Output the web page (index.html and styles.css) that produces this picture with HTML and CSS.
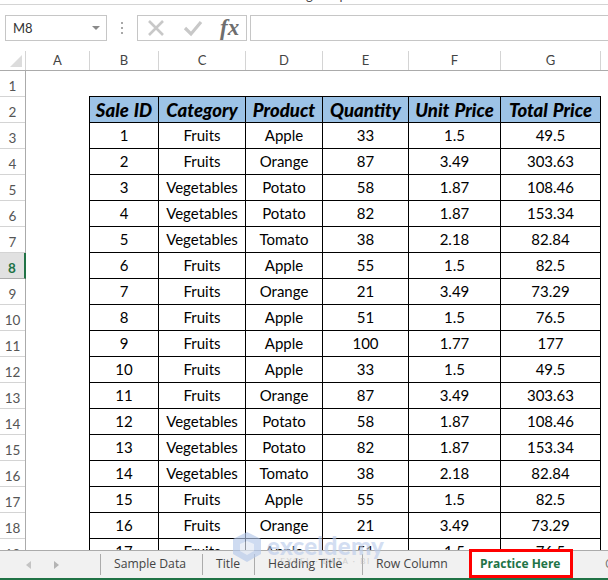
FILE: index.html
```html
<!DOCTYPE html>
<html lang="en">
<head>
<meta charset="utf-8">
<title>Practice Here</title>
<link rel="stylesheet" href="styles.css">
</head>
<body>
<div class="app">
  <div class="titlebar"><span class="title-text">Heading Template</span></div>
  <div class="formula">
    <div class="namebox"><span>M8</span><i class="caret"></i></div>
    <div class="grip"><b></b><b></b><b></b></div>
    <div class="fbtns">
      <svg class="ico" width="18" height="18" viewBox="0 0 18 18"><path d="M2 2 L16 16 M16 2 L2 16" stroke="#c8c8c8" stroke-width="2.6" fill="none"/></svg>
      <svg class="ico" width="20" height="18" viewBox="0 0 20 18"><path d="M2 9 L8 15 L18 3" stroke="#c8c8c8" stroke-width="3.2" fill="none"/></svg>
      <span class="fx">fx</span>
    </div>
    <div class="finput"></div>
  </div>
  <div class="colhead">
    <div class="corner"><i></i></div>
    <div class="ch a">A</div><div class="ch b">B</div><div class="ch c">C</div><div class="ch d">D</div><div class="ch e">E</div><div class="ch f">F</div><div class="ch g">G</div>
  </div>
  <div class="sheet">
    <div class="rowhead" id="rowhead"></div>
    <div class="cells">
      <div class="spacer"></div>
      <div class="table" id="table"></div>
    </div>
  </div>
  <div class="tabs">
    <div class="nav"><i class="left"></i><i class="right"></i></div>
    <div class="tab t1">Sample Data</div>
    <div class="tab t2">Title</div>
    <div class="tab t3">Heading Title</div>
    <div class="tab t4">Row Column</div>
    <div class="tab active">Practice Here</div>
    <div class="tab more">C</div>
  </div>
  <div class="status"></div>
  <div class="mark">
    <svg width="32" height="30" viewBox="0 0 32 30"><path d="M16 0 L30 7 L30 22 L16 30 L2 22 L2 7 Z" fill="#b4c8ea"/><path d="M16 9 L23 12 L23 19 L16 23 L9 19 L9 12 Z" fill="#dfe7f5"/></svg>
    <div class="mark-text"><span class="mark-big">exceldemy</span><span class="mark-small">EXCEL · DATA · BI</span></div>
  </div>
</div>
<script src="app.js"></script>
</body>
</html>
```
FILE: app.js
```js
var data = [
 [1,"Fruits","Apple",33,"1.5","49.5"],[2,"Fruits","Orange",87,"3.49","303.63"],
 [3,"Vegetables","Potato",58,"1.87","108.46"],[4,"Vegetables","Potato",82,"1.87","153.34"],
 [5,"Vegetables","Tomato",38,"2.18","82.84"],[6,"Fruits","Apple",55,"1.5","82.5"],
 [7,"Fruits","Orange",21,"3.49","73.29"],[8,"Fruits","Apple",51,"1.5","76.5"],
 [9,"Fruits","Apple",100,"1.77","177"],[10,"Fruits","Apple",33,"1.5","49.5"],
 [11,"Fruits","Orange",87,"3.49","303.63"],[12,"Vegetables","Potato",58,"1.87","108.46"],
 [13,"Vegetables","Potato",82,"1.87","153.34"],[14,"Vegetables","Tomato",38,"2.18","82.84"],
 [15,"Fruits","Apple",55,"1.5","82.5"],[16,"Fruits","Orange",21,"3.49","73.29"],
 [17,"Fruits","Apple",51,"1.5","76.5"]];
var heads = ["Sale ID","Category","Product","Quantity","Unit Price","Total Price"];
var rh = document.getElementById("rowhead");
for (var i = 1; i <= 19; i++) {
  var r = document.createElement("div");
  r.className = "rn" + (i === 8 ? " sel" : "");
  r.textContent = i;
  rh.appendChild(r);
}
var t = document.getElementById("table");
function add(txt, cls) {
  var c = document.createElement("div");
  c.className = cls;
  c.textContent = txt;
  t.appendChild(c);
}
heads.forEach(function (h) { add(h, "cell head"); });
data.forEach(function (row) { row.forEach(function (v) { add(v, "cell"); }); });
```
FILE: styles.css
```css
* { box-sizing: border-box; }
html, body { margin: 0; padding: 0; }
body { width: 608px; height: 580px; overflow: hidden; background: #fff; font-family: Lato, "Open Sans", sans-serif; }
.app { width: 608px; height: 580px; display: flex; flex-direction: column; overflow: hidden; position: relative; }

.titlebar { height: 5px; flex: none; border-bottom: 1px solid #d4d4d4; overflow: hidden; text-align: center; }
.title-text { display: block; font-size: 13px; line-height: 16px; margin-top: -13px; margin-left: 25px; color: #444; }

.formula { height: 46px; flex: none; display: flex; align-items: flex-start; padding: 10px 0 0 5px; }
.namebox { width: 102px; height: 26px; border: 1px solid #c6c6c6; display: flex; align-items: center; justify-content: space-between; padding: 0 6px 0 7px; font-size: 13px; color: #333; }
.caret { width: 0; height: 0; border-left: 4px solid transparent; border-right: 4px solid transparent; border-top: 4px solid #8a8a8a; }
.grip { width: 30px; height: 26px; display: flex; flex-direction: column; align-items: center; justify-content: center; gap: 3px; }
.grip b { width: 2px; height: 2px; background: #a8a8a8; }
.fbtns { width: 110px; height: 26px; border: 1px solid #c6c6c6; display: flex; align-items: center; padding-left: 9px; gap: 18px; }
.fx { font-family: "Liberation Serif", serif; font-style: italic; font-weight: bold; font-size: 23px; color: #6e6e6e; line-height: 20px; margin-left: -1px; }
.finput { flex: 1; height: 26px; margin-left: 3px; border: solid #c6c6c6; border-width: 1px 0 1px 1px; }

.colhead { height: 20px; flex: none; display: flex; border-bottom: 1px solid #ababab; font-size: 13px; color: #444; }
.corner { width: 26px; border-right: 1px solid #d4d4d4; position: relative; }
.corner i { position: absolute; right: 3px; bottom: 3px; width: 0; height: 0; border-left: 12px solid transparent; border-bottom: 12px solid #dcdcdc; }
.ch { text-align: center; line-height: 19px; border-right: 1px solid #d4d4d4; }
.ch.a { width: 64px; }
.ch.b { width: 69px; }
.ch.c { width: 87px; }
.ch.d { width: 77px; }
.ch.e { width: 86px; }
.ch.f { width: 92px; }
.ch.g { width: 100px; }

.sheet { flex: 1; min-height: 0; display: flex; overflow: hidden; }
.rowhead { width: 26px; flex: none; border-right: 1px solid #ababab; }
.rn { height: 26px; border-bottom: 1px solid #d4d4d4; font-size: 13.5px; color: #555; line-height: 26px; padding-top: 2px; text-align: center; }
.rn.sel { background: #e1e1e1; color: #217346; font-weight: bold; margin-right: -1px; border-right: 2px solid #217346; border-bottom-color: #ababab; }
.cells { flex: 1; }
.spacer { height: 25px; }
.table { margin-left: 63px; width: 512px; display: grid; grid-template-columns: 69px 87px 77px 86px 92px 100px; border-top: 1px solid #000; border-left: 1px solid #000; }
.cell { height: 26px; padding-bottom: 2px; border-right: 1px solid #000; border-bottom: 1px solid #000; display: flex; align-items: center; justify-content: center; font-size: 15px; color: #000; white-space: nowrap; }
.head { padding-bottom: 0; background: #9dc3e6; font-weight: 900; font-style: italic; font-size: 18.5px; word-spacing: 1px; }

.mark { position: absolute; left: 231px; top: 532px; display: flex; gap: 4px; opacity: .65; pointer-events: none; }
.mark-text { display: flex; flex-direction: column; }
.mark-big { font-size: 24px; font-weight: 900; color: #bccdec; line-height: 22px; letter-spacing: .3px; margin-top: 3px; }
.mark-small { font-size: 8px; color: #bdbdbd; letter-spacing: 1.6px; line-height: 9px; text-align: center; }

.tabs { height: 28px; flex: none; display: flex; align-items: stretch; background: #f1f1f1; border-top: 1px solid #ababab; font-family: "Open Sans", sans-serif; font-size: 12.2px; color: #444; }
.nav { width: 100px; flex: none; display: flex; align-items: center; padding-left: 26px; gap: 20px; }
.nav i { width: 0; height: 0; border-top: 4px solid transparent; border-bottom: 4px solid transparent; }
.nav .left { border-right: 5px solid #c4c4c4; }
.nav .right { border-left: 5px solid #b4b4b4; margin-left: 3px; }
.tab { flex: none; padding: 0 0 2px 14px; display: flex; align-items: center; white-space: nowrap; position: relative; }
.tab::before { content: ""; position: absolute; left: 0; top: 3px; bottom: 3px; width: 1px; background: #ababab; }
.tab.t1 { width: 102px; }
.tab.t2 { width: 52px; }
.tab.t3 { width: 108px; }
.tab.t4 { width: 107px; }
.tab.active { width: 104px; height: 29px; margin-top: -2px; padding: 0 0 1px 8px; border: 3px solid #ff0000; background: #fff; color: #217346; font-weight: 700; font-size: 12px; }
.tab.active::before, .tab.more::before { display: none; }
.tab.more { padding-left: 32px; color: #777; }
.status { height: 2px; flex: none; background: #217346; }
```
